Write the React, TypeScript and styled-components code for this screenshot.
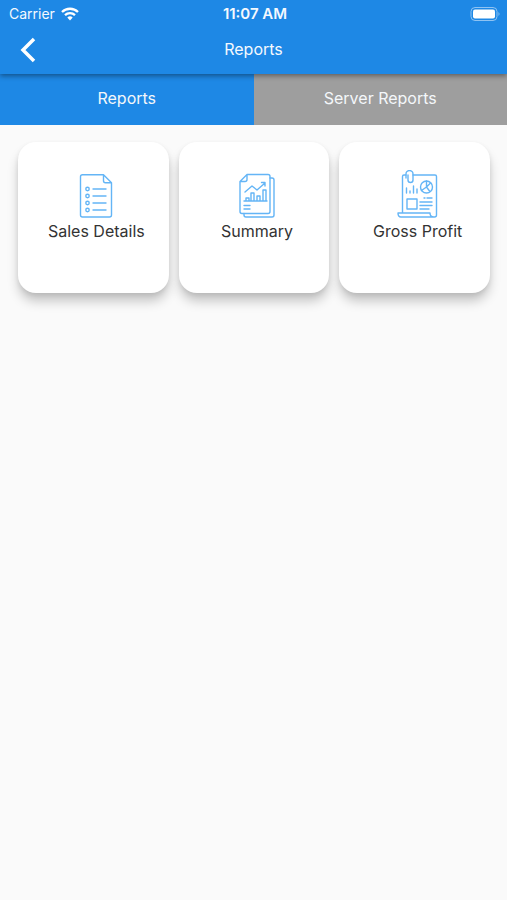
import React, { useState } from "react";
import styled, { createGlobalStyle } from "styled-components";

const GlobalStyle = createGlobalStyle`
  * { box-sizing: border-box; }
  body {
    margin: 0;
    background: #fafafa;
    font-family: Inter, "Liberation Sans", sans-serif;
  }
  button { font: inherit; border: 0; cursor: pointer; }
`;

const Screen = styled.div`
  display: flex;
  flex-direction: column;
  min-height: 100vh;
  background: #fafafa;
`;

const Header = styled.header`
  position: relative;
  z-index: 1;
  background: #1e88e5;
  color: #f4f9fe;
  box-shadow: 0 2px 5px rgba(0, 0, 0, 0.4);
`;

const StatusBar = styled.div`
  display: grid;
  grid-template-columns: 1fr auto 1fr;
  align-items: center;
  height: 26px;
  padding: 2px 6px 0 9px;
  font-size: 14px;
  line-height: 24px;
`;

const Carrier = styled.span`
  display: flex;
  align-items: center;
  gap: 6px;
`;

const Clock = styled.time`
  font-size: 15px;
  font-weight: 600;
`;

const BatteryIcon = styled.svg`
  justify-self: end;
`;

const NavBar = styled.div`
  display: grid;
  grid-template-columns: 56px 1fr 56px;
  align-items: center;
  height: 48px;
  padding-bottom: 2px;
`;

const BackButton = styled.button`
  display: grid;
  place-items: center;
  height: 46px;
  padding: 2px 0 0;
  background: none;
  color: #fff;
`;

const Title = styled.h1`
  margin: 0;
  font-size: 16px;
  line-height: 24px;
  font-weight: 400;
  text-align: center;
`;

const Tabs = styled.div`
  display: grid;
  grid-template-columns: 1fr 1fr;
`;

const Tab = styled.button<{ $active: boolean }>`
  height: 51px;
  padding: 0 0 4px;
  background: ${(p) => (p.$active ? "#1e88e5" : "#9e9e9e")};
  color: #f4f7fa;
  font-size: 16px;
  line-height: 24px;
`;

const CardGrid = styled.main`
  display: grid;
  grid-template-columns: repeat(3, 1fr);
  gap: 10px;
  padding: 17px 17px 32px 18px;
`;

const Card = styled.button`
  display: flex;
  flex-direction: column;
  align-items: center;
  aspect-ratio: 1;
  padding: 28px 0 0 6px;
  border-radius: 18px;
  background: #fff;
  color: #333;
  font-size: 16px;
  line-height: 26px;
  white-space: nowrap;
  box-shadow: 0 9px 12px -1px rgba(0, 0, 0, 0.22), 0 2px 5px rgba(0, 0, 0, 0.08);
`;

const IconFrame = styled.svg`
  display: block;
  flex: none;
  fill: none;
  stroke: #64b5f6;
  stroke-width: 1.4;
  stroke-linecap: round;
  stroke-linejoin: round;
`;

const ChecklistIcon = () => (
  <IconFrame width="48" height="48" viewBox="0 0 48 48" aria-hidden="true">
    <path d="M10.500 4.700h21l8 8v32.300q0 2-2 2h-27q-2 0-2-2V6.700q0-2 2-2zM31.500 4.700v6q0 2 2 2h6" />
    {[19, 26, 33, 40].map((y) => (
      <g key={y}>
        <circle cx="15.500" cy={y} r="1.700" />
        <path d={`M21 ${y}h13`} />
      </g>
    ))}
  </IconFrame>
);

const ChartPagesIcon = () => (
  <IconFrame width="48" height="48" viewBox="0 0 48 48" aria-hidden="true">
    <path d="M14 4.500h21q2 0 2 2v35q0 2-2 2H9q-2 0-2-2V11.500zM14 4.500v5q0 2-2 2H7" />
    <path d="M37 8h2q2 0 2 2v35q0 2-2 2H13q-2 0-2-2v-1.500" />
    <path d="M12 22l7-6 5 4 8-7M28.500 12.500H32V16" />
    <path d="M11 31h23M13 31v-3h3v3M18 31v-8h3v8M24 31v-5h3v5M30 31V20h3v11M11 35.500h6M11 39h6" />
  </IconFrame>
);

const ProfitSheetIcon = () => (
  <IconFrame width="48" height="48" viewBox="-2 0 48 48" aria-hidden="true">
    <path d="M17 5h22q1.500 0 1.500 1.500V45q0 2-2 2H5q-3 0-3-4h32q0 4 4 4M10 5h-2q-1.500 0-1.500 1.500V43" />
    <path d="M10 8V4a3.500 3.500 0 0 1 7 0v6a2.500 2.500 0 0 1-5 0V5" />
    <path d="M10.500 23v-5M14 23v-2M17.500 23v-7M21 23v-4" />
    <circle cx="30.500" cy="17" r="6" />
    <path d="M30.500 11v6l-5 3.500M30.500 17l4-4M30.500 17l3 4" />
    <path d="M11 29h10v10H11zM28 28h1M31 28h5M24 32h12M24 35.500h12M24 39h9" />
  </IconFrame>
);

const reports = [
  { label: "Sales Details", Icon: ChecklistIcon },
  { label: "Summary", Icon: ChartPagesIcon },
  { label: "Gross Profit", Icon: ProfitSheetIcon },
];

const tabs = ["Reports", "Server Reports"];

export default function App() {
  const [active, setActive] = useState(tabs[0]);
  return (
    <Screen>
      <GlobalStyle />
      <Header>
        <StatusBar>
          <Carrier>
            Carrier
            <svg width="18" height="14" viewBox="0 0 18 14" fill="none" stroke="#fff" strokeWidth="2.300" aria-hidden="true">
              <path d="M1 5a11.500 11.500 0 0 1 16 0M4 8.200a7.200 7.200 0 0 1 10 0" />
              <path d="M6.300 10.600a4 4 0 0 1 5.400 0L9 13.500z" fill="#fff" stroke="none" />
            </svg>
          </Carrier>
          <Clock>11:07 AM</Clock>
          <BatteryIcon width="31" height="14" viewBox="0 0 31 14" aria-hidden="true">
            <rect x="1" y="0.500" width="26" height="13" rx="4" fill="none" stroke="#8fc3f2" />
            <rect x="3" y="2.500" width="22" height="9" rx="2" fill="#fff" />
            <path d="M28.500 5v4q2-2 0-4z" fill="#8fc3f2" />
          </BatteryIcon>
        </StatusBar>
        <NavBar>
          <BackButton aria-label="Back">
            <svg width="16" height="26" viewBox="0 0 16 26" fill="none" stroke="currentColor" strokeWidth="3.500" aria-hidden="true">
              <path d="M14 2L3 13l11 11" />
            </svg>
          </BackButton>
          <Title>Reports</Title>
        </NavBar>
      </Header>
      <Tabs role="tablist">
        {tabs.map((label) => (
          <Tab key={label} role="tab" aria-selected={active === label} $active={active === label} onClick={() => setActive(label)}>
            {label}
          </Tab>
        ))}
      </Tabs>
      <CardGrid>
        {reports.map(({ label, Icon }) => (
          <Card key={label}>
            <Icon />
            {label}
          </Card>
        ))}
      </CardGrid>
    </Screen>
  );
}
